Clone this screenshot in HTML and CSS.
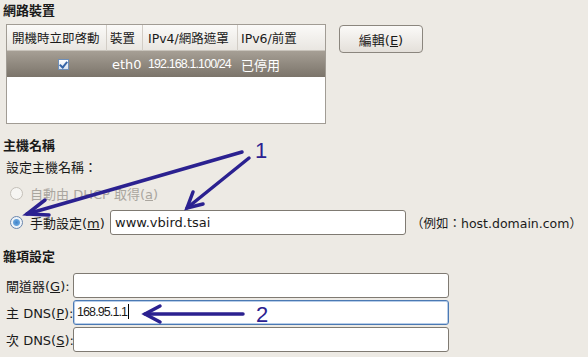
FILE: index.html
```html
<!DOCTYPE html>
<html lang="zh-Hant">
<head>
    <meta charset="UTF-8">
    <title>網路設定</title>
    <link rel="stylesheet" href="styles.css">
</head>
<body>

<div class="page">
    <div class="section-title">網路裝置</div>
    <div class="device-row">
        <div class="device-list">
            <table>
                <tr class="head">
                    <th class="col-boot">開機時立即啓動</th>
                    <th class="col-dev">裝置</th>
                    <th class="col-ipv4">IPv4/網路遮罩</th>
                    <th class="col-ipv6">IPv6/前置</th>
                </tr>
                <tr class="selected">
                    <td class="col-boot"><span class="check"></span></td>
                    <td class="col-dev">eth0</td>
                    <td class="col-ipv4 narrow">192.168.1.100/24</td>
                    <td class="col-ipv6">已停用</td>
                </tr>
            </table>
        </div>
        <button class="edit-button">編輯(<u>E</u>)</button>
    </div>

    <div class="section-title host-title">主機名稱</div>
    <div class="hint-label">設定主機名稱：</div>
    <div class="radio-row disabled">
        <span class="radio"></span>
        <span class="radio-text">自動由 DHCP 取得(<u>a</u>)</span>
    </div>
    <div class="radio-row">
        <span class="radio on"></span>
        <span class="radio-text manual">手動設定(<u>m</u>)</span>
        <div class="entry host-entry">www.vbird.tsai</div>
        <span class="example">（例如：host.domain.com）</span>
    </div>

    <div class="section-title misc-title">雜項設定</div>
    <div class="field-list">
        <div class="field">
            <span class="field-label">閘道器(<u>G</u>):</span>
            <div class="entry"></div>
        </div>
        <div class="field">
            <span class="field-label">主 DNS(<u>P</u>):</span>
            <div class="entry focused narrow">168.95.1.1<span class="caret"></span></div>
        </div>
        <div class="field">
            <span class="field-label">次 DNS(<u>S</u>):</span>
            <div class="entry"></div>
        </div>
    </div>
</div>

<svg class="marks" width="588" height="357" viewBox="0 0 588 357">
    <g stroke="#2b2190" stroke-width="3.5" stroke-linecap="round" fill="none">
        <line x1="242" y1="152" x2="27" y2="214"/>
        <polyline points="45,200 27,214 49,215"/>
        <line x1="249" y1="158" x2="187" y2="208"/>
        <polyline points="193,192 187,208 203,204"/>
        <line x1="243" y1="314" x2="145" y2="314"/>
        <polyline points="160,306 145,314 160,322"/>
    </g>
    <text x="255" y="158" class="mark-num">1</text>
    <text x="256" y="322" class="mark-num">2</text>
</svg>

</body>
</html>
```

FILE: styles.css
```css
body {
    margin: 0;
    background-color: #edeae4;
    font-family: "DejaVu Sans", "Noto Sans CJK TC", sans-serif;
    font-size: 13px;
    color: #1a1a1a;
    width: 588px;
    height: 357px;
    overflow: hidden;
    position: relative;
}

.page {
    padding: 0 0 0 6px;
    display: flex;
    flex-direction: column;
}

.section-title {
    font-weight: bold;
    line-height: 18px;
    margin-left: -3px;
    margin-top: 2px;
    height: 22px;
}

.device-row {
    display: flex;
    align-items: flex-start;
    gap: 13px;
}

.device-list {
    width: 318px;
    height: 98px;
    border: 1px solid #a19c94;
    background-color: #fff;
    overflow: hidden;
}

.device-list table {
    border-collapse: separate;
    border-spacing: 0;
    table-layout: fixed;
    width: 318px;
}

.device-list th,
.device-list td {
    box-sizing: border-box;
    height: 26px;
    padding: 0;
    white-space: nowrap;
    overflow: hidden;
}

.device-list th {
    font-weight: normal;
    text-align: left;
    font-size: 12.5px;
    border-bottom: 1px solid #c9c4bc;
    border-right: 1px solid #d2cdc6;
    background: linear-gradient(#fbfaf8, #e9e6e1);
}

.device-list th:last-child {
    border-right: none;
}

.device-list td {
    color: #fff;
}

.selected {
    background: linear-gradient(#a69f95, #7b746a);
}

.col-boot {
    width: 100px;
    padding-left: 5px !important;
}

.col-dev {
    width: 36px;
    padding-left: 3px !important;
}

.col-ipv4 {
    width: 95px;
    padding-left: 5px !important;
}

.col-ipv6 {
    padding-left: 3px !important;
}

td.col-boot {
    text-align: center;
}

td.col-dev {
    padding-left: 5px !important;
}

.narrow {
    font-family: "Liberation Sans", "Noto Sans CJK TC", sans-serif;
    letter-spacing: -0.9px;
    font-size: 12.5px;
}

.check {
    display: inline-block;
    width: 9px;
    height: 9px;
    margin-left: 8px;
    border: 1px solid #6f8fb8;
    background: linear-gradient(#ffffff, #d9e3f0);
    position: relative;
    vertical-align: -1px;
}

.check::after {
    content: "";
    position: absolute;
    left: 2px;
    top: 0;
    width: 3px;
    height: 6px;
    border-right: 2px solid #3766a8;
    border-bottom: 2px solid #3766a8;
    transform: rotate(40deg);
}

.edit-button {
    width: 84px;
    height: 28px;
    margin-top: 1px;
    border: 1px solid #8b867e;
    border-radius: 4px;
    background: linear-gradient(#fbfaf8, #e4e0da);
    font-family: "DejaVu Sans", "Noto Sans CJK TC", sans-serif;
    font-size: 13px;
    color: #1a1a1a;
    padding: 0;
}

.host-title {
    margin-top: 13px;
    height: 20px;
}

.hint-label {
    line-height: 18px;
    margin-top: 2px;
}

.radio-row {
    display: flex;
    align-items: center;
    height: 25px;
    margin-top: 5px;
}

.radio-row.disabled {
    color: #aaa69f;
    height: 24px;
    margin-top: 4px;
}

.radio {
    flex-shrink: 0;
    width: 11px;
    height: 11px;
    border: 1px solid #9a958d;
    border-radius: 50%;
    background: #f6f5f2;
    margin: 0 7px 0 4px;
}

.disabled .radio {
    border-color: #c4c0b9;
}

.radio.on {
    border-color: #6a86ad;
    background: radial-gradient(circle, #3f82c9 0, #66a3dc 3px, #eef3f8 4px);
}

.radio-text {
    white-space: nowrap;
}

.radio-text.manual {
    width: 80px;
    flex-shrink: 0;
}

.entry {
    box-sizing: border-box;
    flex-shrink: 0;
    height: 25px;
    border: 1px solid #7f7a72;
    border-radius: 3px;
    background: #fff;
    padding: 0 3px;
    line-height: 23px;
    white-space: nowrap;
}

.host-entry {
    width: 296px;
    padding-left: 4px;
}

.example {
    margin-left: 5px;
    font-size: 12.5px;
    white-space: nowrap;
}

.misc-title {
    margin-top: 13px;
    height: 25px;
}

.field-list {
    display: flex;
    flex-direction: column;
    gap: 2px;
}

.field {
    display: flex;
    align-items: center;
}

.field-label {
    width: 67px;
    white-space: nowrap;
}

.field .entry {
    width: 376px;
}

.entry.focused {
    border-color: #4b79b3;
    box-shadow: inset 0 0 0 1px #b7cde9;
    padding-left: 3px;
}

.caret {
    display: inline-block;
    width: 1px;
    height: 15px;
    background: #000;
    vertical-align: -3px;
    margin-left: 1px;
}

.marks {
    position: absolute;
    left: 0;
    top: 0;
    pointer-events: none;
}

.mark-num {
    font-family: "Liberation Sans", sans-serif;
    font-size: 22px;
    fill: #2b2190;
}
```
